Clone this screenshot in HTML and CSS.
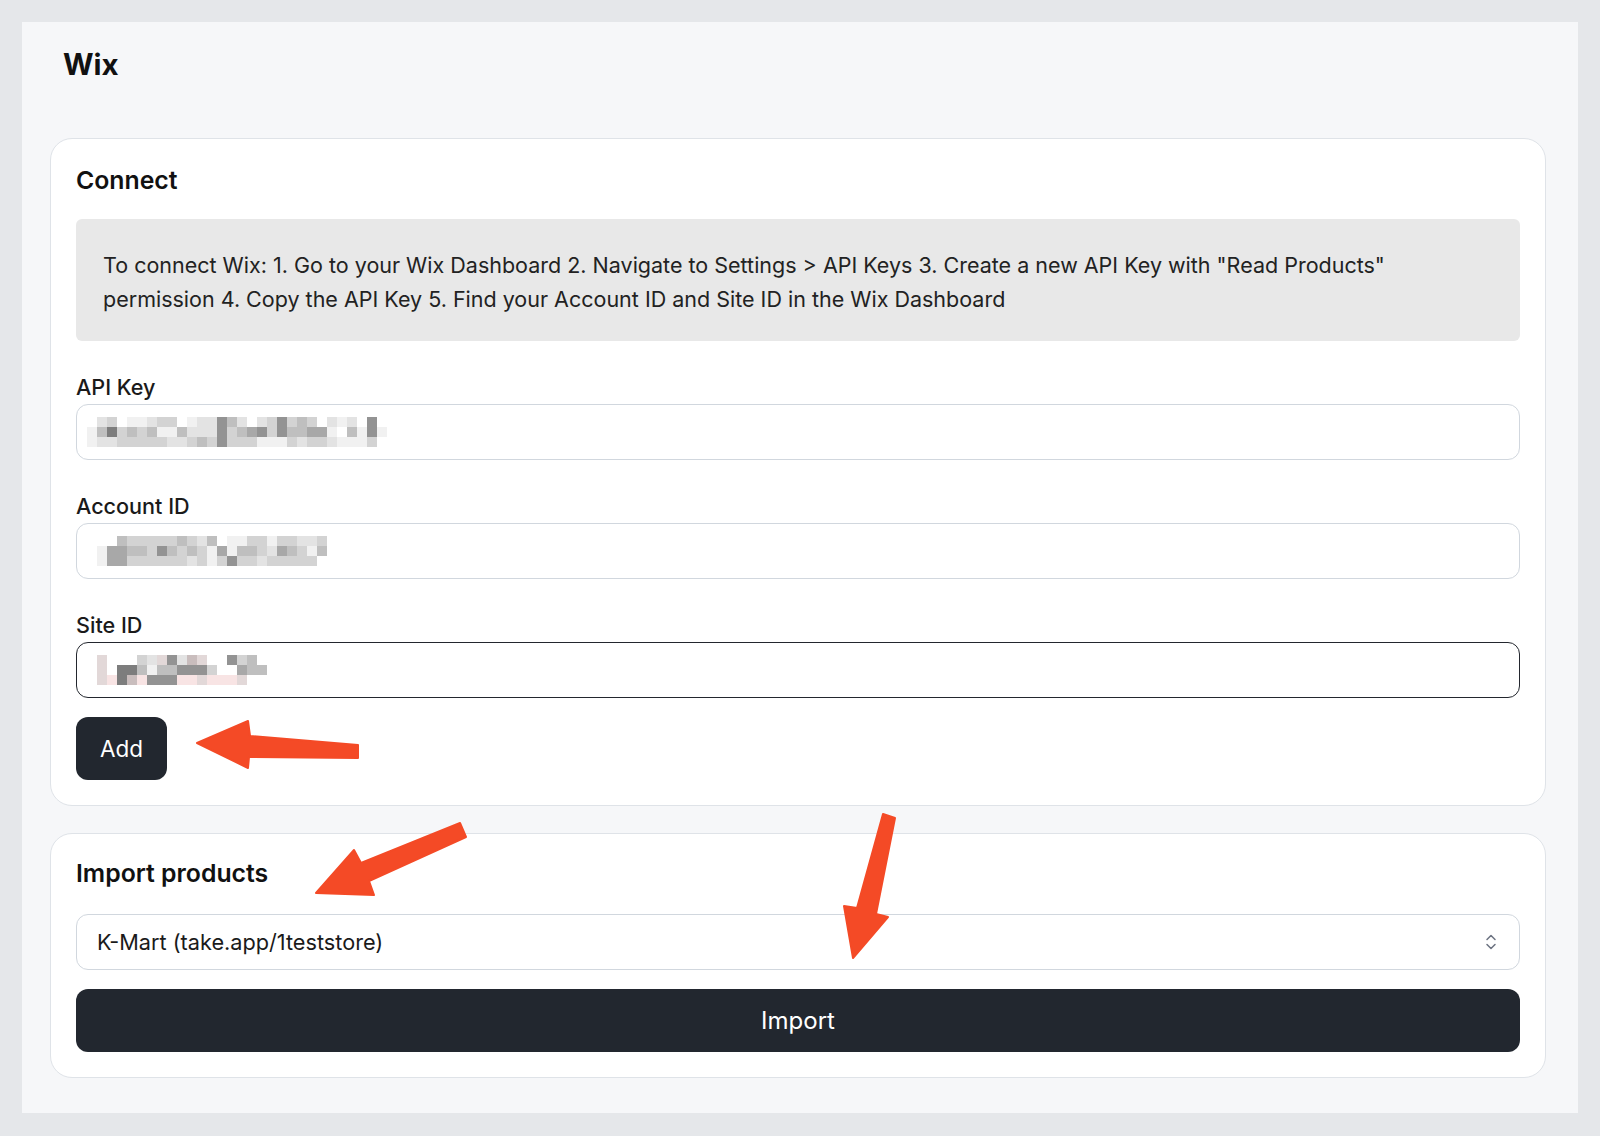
FILE: index.html
```html
<!DOCTYPE html>
<html lang="en">
<head>
<meta charset="UTF-8">
<meta name="viewport" content="width=device-width, initial-scale=1.0">
<title>Wix</title>
<link rel="stylesheet" href="styles.css">
</head>
<body>
<div class="panel">
  <h1 class="page-title">Wix</h1>

  <section class="card">
    <h2 class="card-title">Connect</h2>
    <div class="info">
      To connect Wix: 1. Go to your Wix Dashboard 2. Navigate to Settings &gt; API Keys 3. Create a new API Key with "Read Products" permission 4. Copy the API Key 5. Find your Account ID and Site ID in the Wix Dashboard
    </div>

    <div class="field">
      <label class="field-label">API Key</label>
      <div class="input">
        <div class="mosaic" data-rows="0bc0aabcc0abbfdb0bcfcdc0bab0f,adgcdcdaadbbbfcdefcfddeea0dafa,abbcccccbbcdcfcccaaacbccbaaac"></div>
      </div>
    </div>

    <div class="field">
      <label class="field-label">Account ID</label>
      <div class="input">
        <div class="mosaic" data-rows="000dcccccdcbd0aaccaccbbc,0aeeddcfdcdcaeaddcbedcad,0aeeccccccbcacfccbccccc"></div>
      </div>
    </div>

    <div class="field">
      <label class="field-label">Site ID</label>
      <div class="input is-focused">
        <div class="mosaic" data-rows="0q000cbqfbrq00fcd,0q0ggdaddfffc00edd,0qpgrpfffppqpppq"></div>
      </div>
    </div>

    <button class="btn btn-small">Add</button>
  </section>

  <section class="card card-import">
    <h2 class="card-title">Import products</h2>
    <div class="select">
      <span>K-Mart (take.app/1teststore)</span>
      <svg width="12" height="20" viewBox="0 0 12 20" fill="none" stroke="#6b7280" stroke-width="1.5" stroke-linecap="round" stroke-linejoin="round">
        <path d="M2 7.5 L6 3.5 L10 7.5"/>
        <path d="M2 12.5 L6 16.5 L10 12.5"/>
      </svg>
    </div>
    <button class="btn btn-wide">Import</button>
  </section>
</div>

<!-- annotation arrows drawn over the screenshot -->
<svg class="arrows" width="1600" height="1136" viewBox="0 0 1600 1136">
  <g fill="#f44a26" stroke="#f44a26" stroke-width="2" stroke-linejoin="round">
    <polygon points="197,743 248,721 250,736 358,745 358,758 249,757 248,768"/>
    <polygon points="316,893 354,850 361,863 460,823 466,837 369,881 374,895"/>
    <polygon points="883,814 895,818 876,914 888,917 853,958 844,906 857,908"/>
  </g>
</svg>

<script>
var shades = {
  a: '#f1f1f1', b: '#e3e3e3', c: '#d3d3d3', d: '#bfbfbf', e: '#a8a8a8',
  f: '#939393', g: '#7d7d7d', p: '#f8e4e4', q: '#e2d8d8', r: '#c9bdbd'
};

document.querySelectorAll('.mosaic').forEach(function (mosaic) {
  mosaic.dataset.rows.split(',').forEach(function (row) {
    var line = document.createElement('div');
    line.className = 'mosaic-row';
    row.split('').forEach(function (ch) {
      var cell = document.createElement('span');
      cell.className = 'cell';
      if (shades[ch]) cell.style.background = shades[ch];
      line.appendChild(cell);
    });
    mosaic.appendChild(line);
  });
});
</script>
</body>
</html>
```

FILE: styles.css
```css
body {
  margin: 0;
  height: 1136px;
  background-color: #e5e7ea;
  font-family: Inter, "Noto Sans", "Liberation Sans", sans-serif;
  color: #1c1c1e;
  position: relative;
}

.panel {
  margin: 22px 22px 0;
  height: 1091px;
  box-sizing: border-box;
  padding: 23px 32px 0 28px;
  background-color: #f6f7f9;
}

.page-title {
  margin: 0 0 55px 13px;
  font-size: 29.5px;
  line-height: 38px;
  font-weight: 700;
  color: #111;
}

.card {
  background: #ffffff;
  border: 1px solid #dfe3e8;
  border-radius: 22px;
  padding: 27px 25px 25px;
}

.card-import {
  margin-top: 27px;
  padding-top: 25px;
  padding-bottom: 25px;
}

.card-title {
  margin: 0;
  font-size: 24.8px;
  line-height: 28px;
  font-weight: 600;
  color: #111;
}

.info {
  margin-top: 25px;
  padding: 29px 27px 25px;
  background: #e8e8e8;
  border-radius: 6px;
  font-size: 21.5px;
  line-height: 34px;
  color: #222;
}

.field {
  margin-top: 33px;
}

.field-label {
  display: block;
  margin-bottom: 4px;
  font-size: 21.6px;
  line-height: 26px;
  font-weight: 500;
  color: #1a1a1a;
}

.input {
  height: 56px;
  box-sizing: border-box;
  border: 1px solid #d1d7de;
  border-radius: 12px;
  padding-left: 10px;
  display: flex;
  align-items: center;
}

.input.is-focused {
  border: 1.5px solid #23272e;
}

.mosaic {
  filter: blur(0.7px);
}

.mosaic-row {
  display: flex;
}

.cell {
  width: 10px;
  height: 10px;
}

.btn {
  border: none;
  background-color: #22272f;
  color: #ffffff;
  font-family: inherit;
  font-size: 22.5px;
  border-radius: 12px;
  cursor: pointer;
}

.btn-small {
  margin-top: 19px;
  height: 63px;
  padding: 0 24px;
}

.select {
  margin-top: 27px;
  height: 56px;
  box-sizing: border-box;
  border: 1px solid #d1d7de;
  border-radius: 12px;
  padding: 0 22px 0 20px;
  display: flex;
  align-items: center;
  justify-content: space-between;
  font-size: 21.7px;
  color: #1a1a1a;
}

.btn-wide {
  display: block;
  width: 100%;
  margin-top: 19px;
  height: 63px;
  font-size: 24px;
}

.arrows {
  position: absolute;
  top: 0;
  left: 0;
  pointer-events: none;
}
```
